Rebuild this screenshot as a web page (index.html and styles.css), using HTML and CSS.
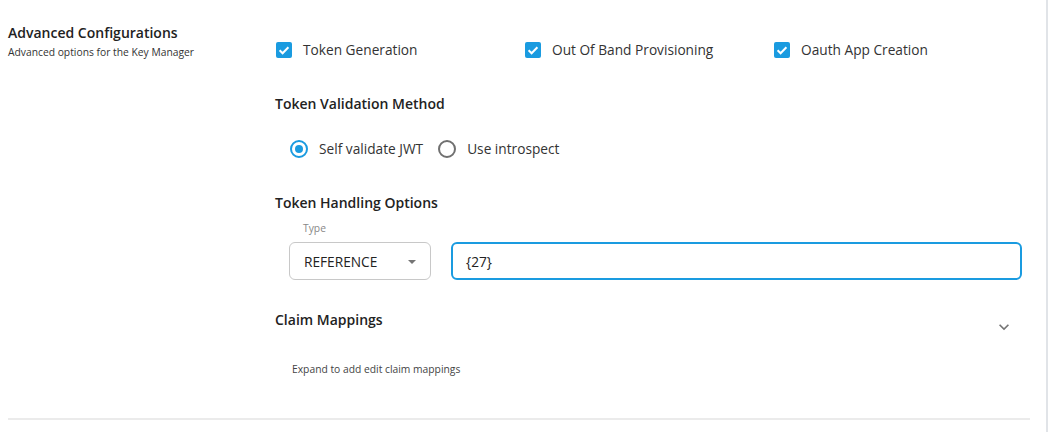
FILE: index.html
```html
<!DOCTYPE html>
<html>
<head>
<meta charset="utf-8">
<link rel="stylesheet" href="styles.css">
</head>
<body>
<div class="frame">
  <div class="section">
    <div class="left">
      <div class="title">Advanced Configurations</div>
      <div class="subtitle">Advanced options for the Key Manager</div>
    </div>
    <div class="right">
      <div class="checks">
        <label class="check"><span class="box"><svg viewBox="0 0 16 16" width="16" height="16"><path d="M3.6 8.2l3 3 5.8-6" fill="none" stroke="#fff" stroke-width="2"/></svg></span>Token Generation</label>
        <label class="check"><span class="box"><svg viewBox="0 0 16 16" width="16" height="16"><path d="M3.6 8.2l3 3 5.8-6" fill="none" stroke="#fff" stroke-width="2"/></svg></span>Out Of Band Provisioning</label>
        <label class="check"><span class="box"><svg viewBox="0 0 16 16" width="16" height="16"><path d="M3.6 8.2l3 3 5.8-6" fill="none" stroke="#fff" stroke-width="2"/></svg></span>Oauth App Creation</label>
      </div>
      <div class="heading h-valid">Token Validation Method</div>
      <div class="radios">
        <label class="radio"><span class="circle on"><span class="dot"></span></span>Self validate JWT</label>
        <label class="radio"><span class="circle"></span>Use introspect</label>
      </div>
      <div class="heading h-handle">Token Handling Options</div>
      <div class="fields">
        <div class="select-wrap">
          <div class="field-label">Type</div>
          <div class="select">REFERENCE<span class="caret"></span></div>
        </div>
        <div class="input">{27}</div>
      </div>
      <div class="claims">
        <div class="claims-head">
          <span class="claims-title">Claim Mappings</span>
          <svg class="chev" viewBox="0 0 24 24" width="20" height="20"><path d="M7.41 8.59L12 13.17l4.59-4.58L18 10l-6 6-6-6z" fill="#757575"/></svg>
        </div>
        <div class="claims-desc">Expand to add edit claim mappings</div>
      </div>
    </div>
  </div>
  <div class="divider"></div>
</div>
</body>
</html>
```

FILE: styles.css
```css
* { box-sizing: border-box; }
html, body { margin: 0; padding: 0; background: #fff; }
body { font-family: "Open Sans", "Noto Sans", sans-serif; color: #222; }
.frame {
  width: 1048px;
  height: 432px;
  border-right: 2px solid #e1e4e8;
  padding: 0 24px 0 8px;
}
.section { display: flex; }
.left { width: 267px; padding-top: 23px; }
.title { font-size: 14px; font-weight: 600; line-height: 20px; color: #222; }
.subtitle { font-size: 10.3px; line-height: 16px; margin-top: 1px; color: #333; }
.right { flex: 1; padding-top: 38px; }
.checks { display: grid; grid-template-columns: 249px 249px 249px; }
.check { display: flex; align-items: center; font-size: 13.7px; line-height: 24px; color: #333; }
.box {
  width: 16px; height: 16px; background: #1a9be0; border-radius: 2px;
  margin: 0 11px 0 1px; display: flex;
}
.heading { font-size: 14px; font-weight: 600; line-height: 20px; color: #222; }
.h-valid { margin-top: 32px; }
.radios { display: flex; margin-top: 23px; padding-left: 15px; }
.radio { display: flex; align-items: center; font-size: 13.7px; line-height: 24px; color: #333; margin-right: 15px; }
.circle {
  width: 18px; height: 18px; border-radius: 50%; border: 2px solid #707070;
  margin-right: 11px; display: flex; align-items: center; justify-content: center;
}
.circle.on { border-color: #1a9be0; }
.dot { width: 8px; height: 8px; border-radius: 50%; background: #1a9be0; }
.h-handle { margin-top: 32px; }
.fields { display: flex; align-items: flex-end; margin-top: 7px; padding-left: 14px; }
.select-wrap { width: 142px; margin-right: 20px; }
.field-label { font-size: 10.3px; line-height: 16px; color: #888; padding-left: 14px; margin-bottom: 6px; }
.select {
  height: 38px; border: 1px solid #c8c8c8; border-radius: 6px;
  display: flex; align-items: center; padding-left: 14px; font-size: 13.7px; color: #222;
  position: relative;
}
.caret {
  position: absolute; right: 14px; top: 17px;
  border-left: 4px solid transparent; border-right: 4px solid transparent; border-top: 4px solid #757575;
}
.input {
  flex: 1; height: 38px; border: 2px solid #1a9be0; border-radius: 6px;
  display: flex; align-items: center; padding-left: 13px; font-size: 13.7px; color: #222;
}
.claims { margin-top: 29px; }
.claims-head { display: flex; align-items: center; justify-content: space-between; height: 20px; padding-right: 8px; }
.claims-title { font-size: 14px; font-weight: 600; color: #222; }
.chev { margin-top: 16px; }
.claims-desc { font-size: 10.3px; line-height: 16px; color: #444; margin-top: 32px; padding-left: 17px; }
.divider { height: 2px; background: #ebebeb; margin-top: 41px; width: 1022px; }
```
